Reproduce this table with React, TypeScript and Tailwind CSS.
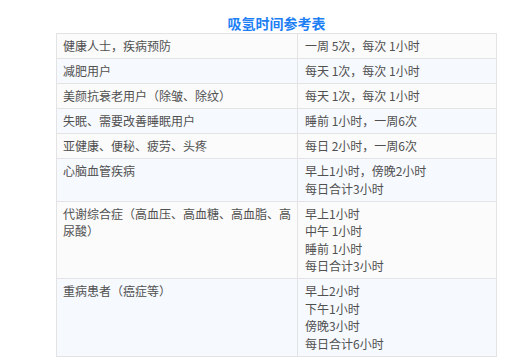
import React from 'react';

const rows: { who: string; time: string[] }[] = [
  { who: '健康人士，疾病预防', time: ['一周 5次，每次 1小时'] },
  { who: '减肥用户', time: ['每天 1次，每次 1小时'] },
  { who: '美颜抗衰老用户（除皱、除纹）', time: ['每天 1次，每次 1小时'] },
  { who: '失眠、需要改善睡眠用户', time: ['睡前 1小时，一周6次'] },
  { who: '亚健康、便秘、疲劳、头疼', time: ['每日 2小时，一周6次'] },
  { who: '心脑血管疾病', time: ['早上1小时，傍晚2小时', '每日合计3小时'] },
  { who: '代谢综合症（高血压、高血糖、高血脂、高尿酸）', time: ['早上1小时', '中午 1小时', '睡前 1小时', '每日合计3小时'] },
  { who: '重病患者（癌症等）', time: ['早上2小时', '下午1小时', '傍晚3小时', '每日合计6小时'] },
];

export default function App() {
  return (
    <div className="w-[515px] h-[364px] bg-white overflow-hidden" style={{ fontFamily: '"Noto Sans CJK SC", "Liberation Sans", sans-serif' }}>
      <div className="ml-[56px] w-[441px] pt-[13px]">
        <h2 className="text-center text-[14px] leading-[20px] font-bold text-[#1e7ff5]">吸氢时间参考表</h2>
        <table className="w-full table-fixed border-collapse text-[12px] leading-[17.5px] text-[#505050]">
          <colgroup>
            <col className="w-[241px]" />
            <col />
          </colgroup>
          <tbody>
            {rows.map((r, i) => (
              <tr key={i} className={i % 2 === 0 ? 'bg-[#fbfbfb]' : 'bg-[#f6f9fe]'}>
                <td className="border border-[#e3e3e3] px-[6px] py-[3.25px] align-top">{r.who}</td>
                <td className="border border-[#e3e3e3] px-[7px] py-[3.25px] align-top">
                  {r.time.map((t, j) => (
                    <div key={j}>{t}</div>
                  ))}
                </td>
              </tr>
            ))}
          </tbody>
        </table>
      </div>
    </div>
  );
}
